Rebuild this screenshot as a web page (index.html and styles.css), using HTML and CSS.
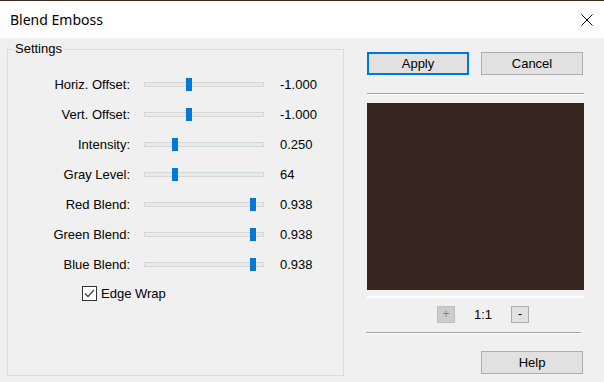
FILE: index.html
```html
<!DOCTYPE html>
<html lang="en">
<head>
    <meta charset="UTF-8">
    <title>Blend Emboss</title>
    <link rel="stylesheet" href="styles.css">
</head>
<body>

    <div class="desktop-edge"></div>

    <div class="titlebar">
        <span class="title">Blend Emboss</span>
        <svg class="close" width="12" height="12" viewBox="0 0 12 12">
            <path d="M0.5 0.5 L11.5 11.5 M11.5 0.5 L0.5 11.5" stroke="#000" stroke-width="1" fill="none"/>
        </svg>
    </div>

    <div class="dialog">
        <div class="group">
            <span class="group-title">Settings</span>

            <div class="row">
                <span class="label">Horiz. Offset:</span>
                <div class="slider"><div class="thumb" style="left: 41px"></div></div>
                <span class="value">-1.000</span>
            </div>
            <div class="row">
                <span class="label">Vert. Offset:</span>
                <div class="slider"><div class="thumb" style="left: 41px"></div></div>
                <span class="value">-1.000</span>
            </div>
            <div class="row">
                <span class="label">Intensity:</span>
                <div class="slider"><div class="thumb" style="left: 27px"></div></div>
                <span class="value">0.250</span>
            </div>
            <div class="row">
                <span class="label">Gray Level:</span>
                <div class="slider"><div class="thumb" style="left: 27px"></div></div>
                <span class="value">64</span>
            </div>
            <div class="row">
                <span class="label">Red Blend:</span>
                <div class="slider"><div class="thumb" style="left: 105px"></div></div>
                <span class="value">0.938</span>
            </div>
            <div class="row">
                <span class="label">Green Blend:</span>
                <div class="slider"><div class="thumb" style="left: 105px"></div></div>
                <span class="value">0.938</span>
            </div>
            <div class="row">
                <span class="label">Blue Blend:</span>
                <div class="slider"><div class="thumb" style="left: 105px"></div></div>
                <span class="value">0.938</span>
            </div>

            <div class="check-row">
                <span class="checkbox">
                    <svg width="13" height="13" viewBox="0 0 13 13">
                        <path d="M2 6.5 L5 9.5 L11 3" stroke="#444" stroke-width="1.3" fill="none"/>
                    </svg>
                </span>
                <span>Edge Wrap</span>
            </div>
        </div>

        <div class="side">
            <div class="buttons">
                <button class="btn default">Apply</button>
                <button class="btn">Cancel</button>
            </div>
            <div class="sep"></div>
            <div class="preview"></div>
            <div class="preview-line"></div>
            <div class="zoom-bar">
                <button class="zoom-btn disabled">+</button>
                <span class="zoom-level">1:1</span>
                <button class="zoom-btn">-</button>
            </div>
            <div class="sep sep-bottom"></div>
            <button class="btn help">Help</button>
        </div>
    </div>

</body>
</html>
```

FILE: styles.css
```css
body {
    margin: 0;
    width: 604px;
    height: 382px;
    overflow: hidden;
    background-color: #f0f0f0;
    font-family: "Liberation Sans", Arial, sans-serif;
    font-size: 13px;
    color: #000;
}

.desktop-edge {
    height: 1px;
    background-color: #3a2a22;
}

.titlebar {
    height: 37px;
    background-color: #fff;
    display: flex;
    align-items: center;
    justify-content: space-between;
    padding: 0 11px 0 10px;
}

.title {
    font-family: "Noto Sans", sans-serif;
    font-size: 14px;
}

.dialog {
    display: flex;
    padding: 11px 0 0 7px;
}

/* group box */
.group {
    position: relative;
    box-sizing: border-box;
    width: 337px;
    height: 327px;
    border: 1px solid #dcdcdc;
    padding-top: 19px;
}

.group-title {
    position: absolute;
    top: -9px;
    left: 5px;
    padding: 0 2px;
    background-color: #f0f0f0;
}

.row {
    display: flex;
    align-items: center;
    height: 30px;
}

.label {
    width: 122px;
    text-align: right;
}

.slider {
    position: relative;
    box-sizing: border-box;
    width: 120px;
    height: 5px;
    margin-left: 14px;
    border: 1px solid #d6d6d6;
    background-color: #e7eaea;
}

.thumb {
    position: absolute;
    top: -5px;
    width: 6px;
    height: 13px;
    background-color: #0078d7;
}

.value {
    margin-left: 16px;
}

.check-row {
    display: flex;
    align-items: center;
    gap: 4px;
    height: 28px;
    padding-left: 74px;
}

.checkbox {
    box-sizing: border-box;
    width: 15px;
    height: 15px;
    border: 1px solid #333;
    background-color: #fff;
    display: flex;
}

/* right column */
.side {
    width: 217px;
    margin-left: 23px;
    padding-top: 3px;
}

.buttons {
    display: flex;
    gap: 12px;
}

.btn {
    box-sizing: border-box;
    width: 102px;
    height: 23px;
    padding: 0;
    border: 1px solid #adadad;
    background-color: #e1e1e1;
    font-family: "Liberation Sans", Arial, sans-serif;
    font-size: 13px;
    color: #000;
}

.btn.default {
    border: 2px solid #0078d7;
}

.btn.help {
    display: block;
    margin: 17px 0 0 114px;
}

.sep {
    height: 1px;
    margin-top: 18px;
    background-color: #a0a0a0;
    border-bottom: 1px solid #fff;
}

.sep-bottom {
    width: 215px;
    margin: 9px 0 0 -1px;
}

.preview {
    height: 187px;
    margin-top: 8px;
    background-color: #372620;
}

.preview-line {
    height: 2px;
    margin-top: 6px;
    background-color: #fff;
}

.zoom-bar {
    display: flex;
    align-items: center;
    margin: 8px 0 0 70px;
    height: 17px;
}

.zoom-btn {
    box-sizing: border-box;
    width: 18px;
    height: 17px;
    padding: 0;
    border: 1px solid #adadad;
    background-color: #e1e1e1;
    font-family: "Liberation Sans", Arial, sans-serif;
    font-size: 12px;
    line-height: 13px;
}

.zoom-btn.disabled {
    border-color: #bfbfbf;
    background-color: #cccccc;
    color: #838383;
}

.zoom-level {
    margin: 0 19px;
    font-size: 13px;
}
```
